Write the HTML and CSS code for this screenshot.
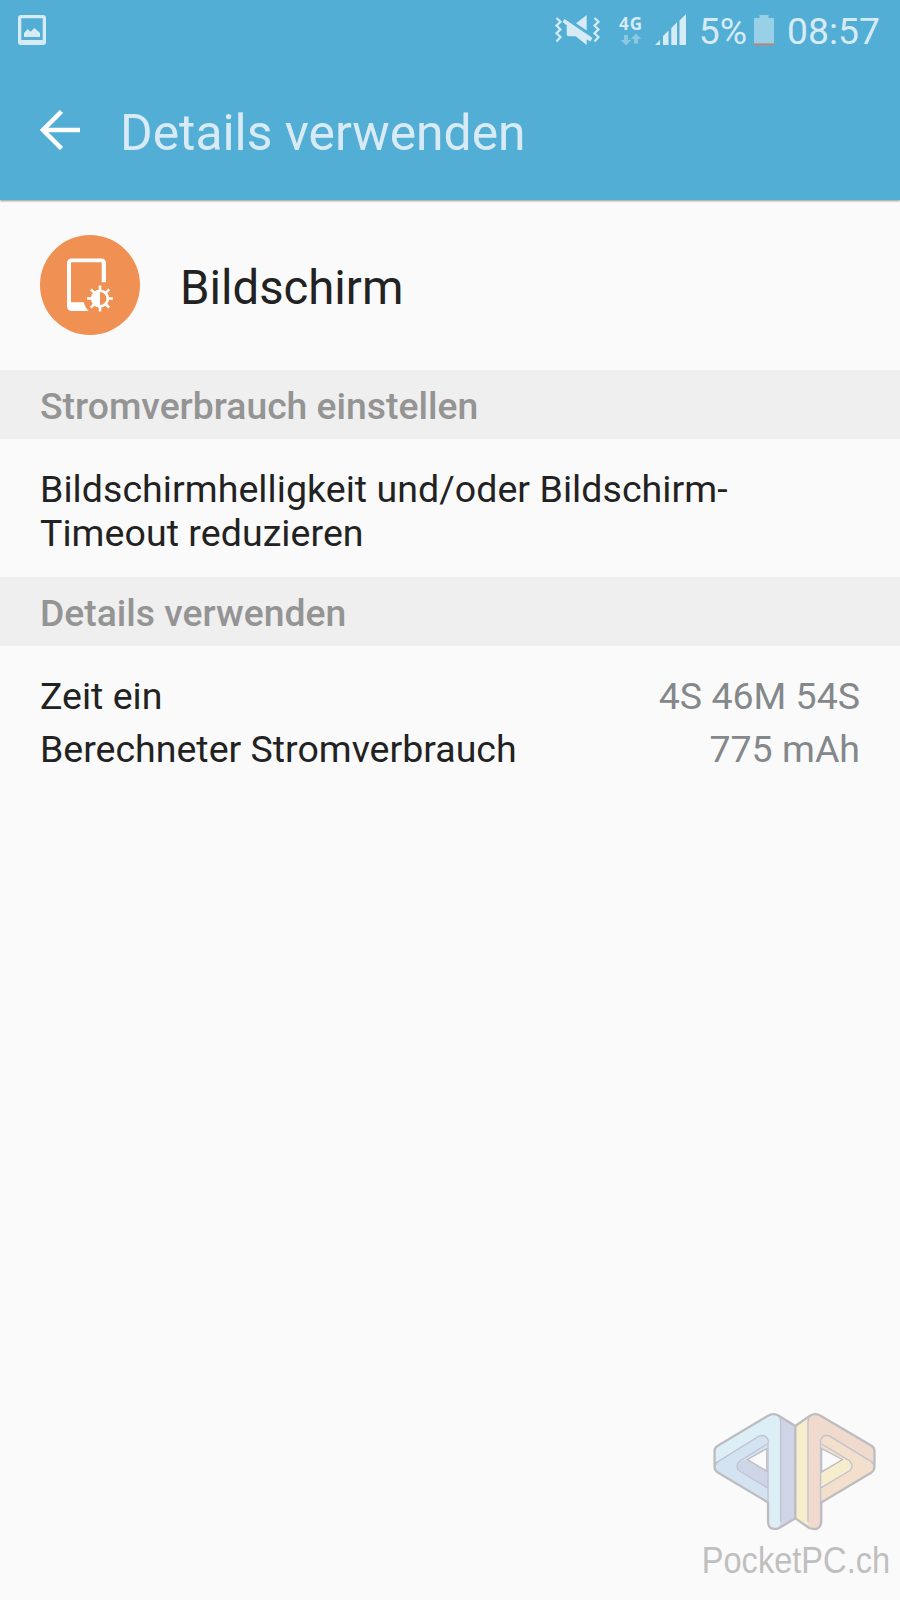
FILE: index.html
```
<!DOCTYPE html>
<html lang="de">

<head>
  <meta charset="UTF-8">
  <meta name="viewport" content="width=device-width, initial-scale=1.0">
  <title>Details verwenden</title>
  <link rel="stylesheet" href="styles.css">
</head>

<body>
  <div class="screen">
    <header class="header">
      <div class="status-bar">
        <svg class="icon-picture" viewBox="0 0 28 30" width="28" height="30">
          <path fill-rule="evenodd" d="M3 0h22a3 3 0 0 1 3 3v24a3 3 0 0 1-3 3H3a3 3 0 0 1-3-3V3a3 3 0 0 1 3-3zM3.300 3.300v21.700h21.400V3.300z" />
          <path d="M6 22v-4l3.800-4 2.700 2.800 4-3.800 5.500 5v4z" />
        </svg>
        <div class="status-right">
          <svg class="icon-mute" viewBox="0 0 46 30" width="46" height="30">
            <path class="wave" d="M1.500 3l4 3.800-4 3.800 4 3.800-4 3.800 4 3.800-4 4.500M39.500 3l4 3.800-4 3.800 4 3.800-4 3.800 4 3.800-4 4.500" />
            <path d="M31.700 0v15.500L21 8.300z" />
            <path d="M9.500 4L37.500 23l-2.300 3.500-3.500-2.300V30l-11-8.800h-6.500a2.500 2.500 0 0 1-2.500-2.500v-8.500L7.500 7z" />
          </svg>
          <svg class="icon-4g" viewBox="0 0 32 34" width="32" height="34">
            <text class="text-4g" x="1" y="18">4G</text>
            <path class="arrows" d="M6 23h4v5h3.300L8 33.500 2.700 28H6zM16 31.500h4V27h3.300L18 21.500 12.700 27H16z" />
          </svg>
          <svg class="icon-signal" viewBox="0 0 31 31" width="31" height="31">
            <path d="M0 31l5-5v5zM8 31v-9l5.500-5.500V31zM16.300 31V14l5.700-5.700V31zM24.500 31V6.500L31 0v31z" />
          </svg>
          <span class="percent">5%</span>
          <svg class="icon-battery" viewBox="0 0 20 30" width="20" height="30">
            <path d="M0 3h5.500V0h9v3H20v25.700H0z" />
            <path class="level" d="M0 28.500h20V30H0z" />
          </svg>
          <span class="clock">08:57</span>
        </div>
      </div>
      <div class="title-bar">
        <svg class="icon-back" viewBox="0 0 40 40" width="40" height="40">
          <path d="M21.500 1.500L3 20l18.500 18.500M3 20h37" />
        </svg>
        <h1 class="title">Details verwenden</h1>
      </div>
    </header>

    <div class="app">
      <svg class="app-icon" viewBox="0 0 100 100" width="100" height="100">
        <circle class="app-circle" cx="50" cy="50" r="50" />
        <path class="phone" d="M61.700 47.200H66V28a4.500 4.500 0 0 0-4.500-4.500h-30A4.500 4.500 0 0 0 27 28v43.500a4.500 4.500 0 0 0 4.500 4.500h17.200c-2.600-2.600-4.400-5.500-4.900-8.700H31V27.200h30.700z" />
        <g class="sun-rays">
          <path d="M60 50.500v26M47 63.500h26M50.800 54.300l18.400 18.400M69.200 54.300L50.800 72.700" />
        </g>
        <circle class="sun-fill" cx="60" cy="63.500" r="7.800" />
        <path class="sun-half" d="M60 55v17a8.500 8.500 0 0 1 0-17z" />
      </svg>
      <span class="app-name">Bildschirm</span>
    </div>

    <h2 class="section">Stromverbrauch einstellen</h2>
    <p class="hint">Bildschirmhelligkeit und/oder Bildschirm-<br>Timeout reduzieren</p>

    <h2 class="section">Details verwenden</h2>
    <div class="details">
      <div class="row">
        <span>Zeit ein</span>
        <span class="value">4S 46M 54S</span>
      </div>
      <div class="row">
        <span>Berechneter Stromverbrauch</span>
        <span class="value">775 mAh</span>
      </div>
    </div>

    <div class="watermark">
      <svg class="logo" viewBox="60 30 510 370" width="170" height="123">
        <!-- left half -->
        <path fill="#d4e3f1" d="M76 150Q76 142 84 137L236 47Q250 38 264 46L316 78V356L268 385Q253 392 240 383Q234 378 234 368V306L84 218Q74 212 73 200Z" />
        <path fill="#dceff6" d="M76 190V150Q76 142 84 137L236 47Q250 38 264 46Q272 52 272 66V366Q272 384 255 388Q234 386 234 368V126Q230 104 208 108Z" />
        <path fill="#cdd5e7" d="M264 46L316 78V356L262 386Q272 378 272 366V66Q272 52 264 46Z" />
        <path fill="#cdd5e7" d="M234 214L172 179L148 186Q134 198 146 212L234 265Z" />
        <path class="line" d="M76 190L208 108Q230 102 236 126M230 133L148 184Q134 198 146 212L234 265M234 214L172 179M272 366V66Q272 52 264 46M76 198Q76 190 84 186" />
        <path class="hole" d="M172 179L230 146V214Z" />
        <!-- right half -->
        <path fill="#f2dfcc" d="M554 150Q552 142 544 137L390 47Q376 38 362 46L316 78V356L358 385Q373 392 388 383Q394 378 394 368V306L544 218Q554 212 555 200Z" />
        <path fill="#f0d9cd" d="M552 190V150Q552 142 544 137L390 47Q376 38 362 46Q354 52 354 66V366Q354 384 370 388Q392 386 392 368V126Q396 104 418 108Z" />
        <path fill="#f5edcc" d="M362 46L316 78V356L362 386Q354 378 354 366V66Q354 52 362 46Z" />
        <path fill="#f5edcc" d="M392 218L458 179L478 184Q494 198 480 212L392 265Z" />
        <path class="line" d="M552 190L418 108Q396 102 390 126M396 133L478 182Q494 198 480 212L392 265M392 218L458 179M354 366V66Q354 52 362 46M552 198Q552 190 544 186" />
        <path class="hole" d="M458 179L395 146V216Z" />
        <path class="line" d="M234 126V368M392 126V368" />
        <path class="outline" d="M316 78L266 47Q250 38 234 47L84 137Q73 143 73 154V200Q73 212 84 219L234 308V366Q234 394 266 386L316 356L358 385Q392 396 394 366V308L544 219Q554 212 554 200V154Q554 143 544 137L392 47Q376 38 360 47ZV356" />
      </svg>
      <span class="watermark-text">PocketPC.ch</span>
    </div>
  </div>
</body>

</html>
```
FILE: styles.css
```
body {
  margin: 0;
  background-color: #fafafa;
  color: #222;
  font-family: Roboto, sans-serif;
  font-size: 37.5px;
  line-height: 44px;
}

.screen {
  display: flex;
  flex-direction: column;
  width: 900px;
  height: 1600px;
}

svg {
  display: block;
  flex-shrink: 0;
}

.header {
  height: 200px;
  background-color: #52aed5;
  box-shadow: 0 1px 2px rgba(0, 0, 0, 0.4);
}

.status-bar {
  display: flex;
  justify-content: space-between;
  height: 60px;
  padding: 0 20px 0 18px;
  color: #d6ebf5;
  fill: #d6ebf5;
}

.icon-picture {
  margin-top: 15px;
}

.status-right {
  display: flex;
}

.icon-mute {
  margin: 15px 17px 0 0;
}

.wave {
  fill: none;
  stroke: #d6ebf5;
  stroke-width: 2.2;
}

.icon-4g {
  margin: 12px 5px 0 0;
}

.text-4g {
  font: bold 17px "Noto Sans", sans-serif;
  letter-spacing: 1px;
}

.arrows {
  fill: #8cc8e2;
}

.icon-signal {
  margin: 14px 13px 0 0;
}

.percent,
.clock {
  padding-top: 9px;
  font-size: 37.3px;
}

.icon-battery {
  margin: 15px 13px 0 7px;
  fill: #97d0e7;
}

.level {
  fill: #d97a5b;
}

.title-bar {
  display: flex;
  align-items: center;
  height: 140px;
  padding-left: 40px;
}

.icon-back {
  fill: none;
  stroke: #fff;
  stroke-width: 4.5;
}

.title {
  margin: 6px 0 0 40px;
  color: #d8ebf4;
  font-size: 49.8px;
  font-weight: 400;
  line-height: 60px;
}

.app {
  display: flex;
  align-items: center;
  height: 170px;
  padding-left: 40px;
}

.app-circle {
  fill: #f09052;
}

.phone {
  fill: #fff;
}

.sun-rays {
  fill: none;
  stroke: #fff;
  stroke-width: 2.6;
}

.sun-fill {
  fill: #f09052;
  stroke: #fff;
  stroke-width: 2.6;
}

.sun-half {
  fill: #fff;
}

.app-name {
  margin: 6px 0 0 40px;
  font-size: 47.3px;
}

.section {
  box-sizing: border-box;
  height: 69px;
  margin: 0;
  padding: 14px 40px 0;
  background-color: #efefef;
  color: #949494;
  font-size: 37.3px;
  font-weight: 500;
}

.hint {
  margin: 0;
  padding: 28px 40px 22px;
  letter-spacing: 0.06px;
}

.details {
  padding: 28px 40px;
}

.row {
  display: flex;
  justify-content: space-between;
  margin-bottom: 9px;
}

.value {
  color: #84888b;
}

.watermark {
  display: flex;
  flex-direction: column;
  align-items: flex-end;
  margin-top: auto;
  padding: 0 10px 17px 0;
}

.logo {
  margin: 0 10px 6px 0;
  stroke-linejoin: round;
}

.line {
  fill: none;
  stroke: #c1c2d0;
  stroke-width: 4;
}

.outline {
  fill: none;
  stroke: #bdbdc1;
  stroke-width: 7;
}

.hole {
  fill: #fafafa;
  stroke: #bdbdc1;
  stroke-width: 4;
}

/* condensed lettering */
.watermark-text {
  color: #bfbfbf;
  font-family: "Liberation Sans", Arial, sans-serif;
  font-size: 36px;
  transform: scaleX(0.905);
  transform-origin: right;
}
```
